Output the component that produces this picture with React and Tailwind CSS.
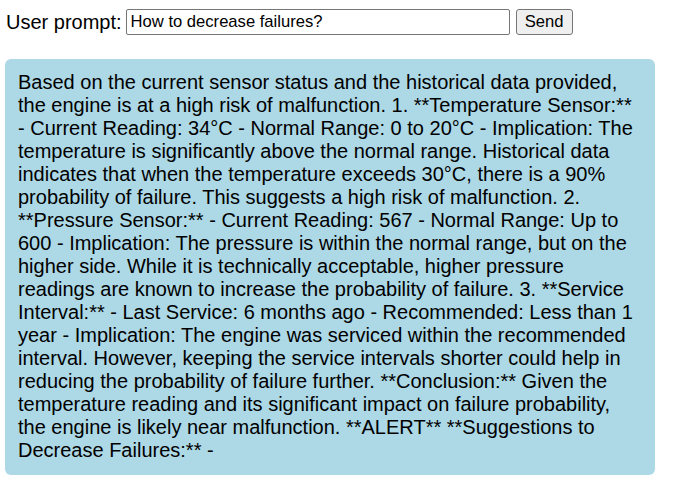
import React, { useState } from 'react';

const answer =
  'Based on the current sensor status and the historical data provided, the engine is at a high risk of malfunction. 1. **Temperature Sensor:** - Current Reading: 34°C - Normal Range: 0 to 20°C - Implication: The temperature is significantly above the normal range. Historical data indicates that when the temperature exceeds 30°C, there is a 90% probability of failure. This suggests a high risk of malfunction. 2. **Pressure Sensor:** - Current Reading: 567 - Normal Range: Up to 600 - Implication: The pressure is within the normal range, but on the higher side. While it is technically acceptable, higher pressure readings are known to increase the probability of failure. 3. **Service Interval:** - Last Service: 6 months ago - Recommended: Less than 1 year - Implication: The engine was serviced within the recommended interval. However, keeping the service intervals shorter could help in reducing the probability of failure further. **Conclusion:** Given the temperature reading and its significant impact on failure probability, the engine is likely near malfunction. **ALERT** **Suggestions to Decrease Failures:** -';

const App = () => {
  const [prompt, setPrompt] = useState('How to decrease failures?');

  return (
    <div className="w-[676px] h-[498px] bg-white text-black font-['Liberation_Sans',Arial,sans-serif]">
      <div className="flex items-center pt-[9px] pl-[6px]">
        <label className="text-[20px] leading-[26px] mr-[4px]">User prompt:</label>
        <input
          value={prompt}
          onChange={(e) => setPrompt(e.target.value)}
          className="w-[384px] h-[26px] border border-[#767676] rounded-[2px] px-[4px] text-[16.6px] outline-none"
        />
        <button className="ml-[6px] w-[57px] h-[26px] bg-[#efefef] border border-[#767676] rounded-[3px] text-[16.6px]">
          Send
        </button>
      </div>

      <div className="mt-[24px] ml-[5px] w-[650px] bg-[#add8e6] rounded-[6px] px-[13px] pt-[12px] pb-[13px]">
        <p className="text-[20px] leading-[23px]">{answer}</p>
      </div>
    </div>
  );
};

export default App;
